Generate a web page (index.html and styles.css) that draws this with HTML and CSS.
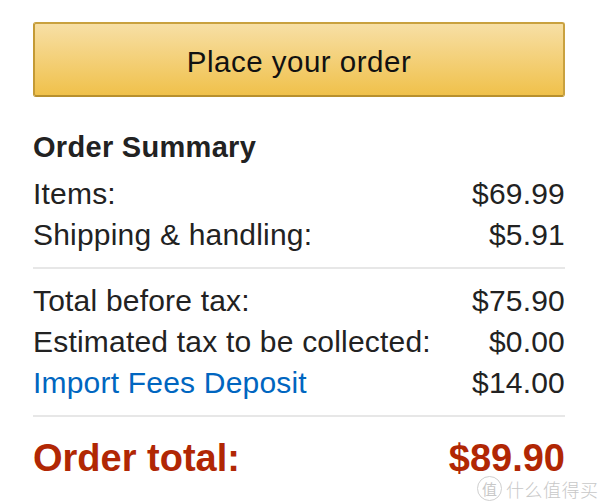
FILE: index.html
```html
<!DOCTYPE html>
<html lang="en">
<head>
  <meta charset="UTF-8" />
  <title>Order Summary</title>
  <link rel="stylesheet" href="styles.css">
</head>
<body>
  <div class="checkout">
    <button class="place-order">Place your order</button>

    <h3 class="summary-title">Order Summary</h3>
    <ul class="summary">
      <li><span>Items:</span><span>$69.99</span></li>
      <li><span>Shipping &amp; handling:</span><span>$5.91</span></li>
    </ul>
    <ul class="summary divided">
      <li><span>Total before tax:</span><span>$75.90</span></li>
      <li><span>Estimated tax to be collected:</span><span>$0.00</span></li>
      <li><a href="#">Import Fees Deposit</a><span>$14.00</span></li>
    </ul>
    <ul class="summary divided">
      <li class="grand-total"><span>Order total:</span><span>$89.90</span></li>
    </ul>
  </div>

  <div class="watermark">
    <span class="wm-badge">值</span>
    <span class="wm-text">什么值得买</span>
  </div>
</body>
</html>
```

FILE: styles.css
```css
body {
  margin: 0;
  font-family: "Liberation Sans", Arial, sans-serif;
  background: #fff;
  color: #111;
}
.checkout {
  width: 532px;
  padding: 22px 0 0 33px;
}
.place-order {
  display: block;
  width: 100%;
  height: 75px;
  font-family: inherit;
  font-size: 29.5px;
  letter-spacing: 0.5px;
  color: #111;
  background: linear-gradient(to bottom, #f7dfa5, #f0c14b);
  border: 2px solid #c9a13f;
  border-left-color: #c49a35;
  border-bottom-color: #b8902e;
  border-radius: 3px;
  padding: 5px 0 0;
  cursor: pointer;
}
.summary-title {
  margin: 30px 0 5px;
  font-size: 29px;
  letter-spacing: 0.3px;
  line-height: 41px;
  font-weight: bold;
  color: #222;
}
ul.summary {
  list-style: none;
  margin: 0;
  padding: 0;
}
.summary li {
  display: flex;
  justify-content: space-between;
  font-size: 30px;
  letter-spacing: 0.2px;
  line-height: 41px;
  color: #222;
}
.summary.divided {
  border-top: 2px solid #e7e7e7;
  margin-top: 12px;
  padding-top: 11px;
}
.summary a {
  color: #0066c0;
  text-decoration: none;
}
.summary li.grand-total {
  font-size: 38px;
  letter-spacing: 0;
  line-height: 36px;
  font-weight: bold;
  color: #b12704;
  padding-top: 12px;
}
.watermark {
  position: absolute;
  left: 477px;
  top: 476px;
  display: flex;
  align-items: center;
  gap: 4px;
  color: #c8c8c8;
  font-family: "Noto Sans CJK SC", sans-serif;
}
.wm-badge {
  width: 23px;
  height: 23px;
  border: 1.5px solid #cfcfcf;
  border-radius: 50%;
  font-size: 15px;
  line-height: 23px;
  text-align: center;
}
.wm-text {
  font-size: 18px;
  line-height: 24px;
  letter-spacing: 0.5px;
  font-weight: 300;
}
```
